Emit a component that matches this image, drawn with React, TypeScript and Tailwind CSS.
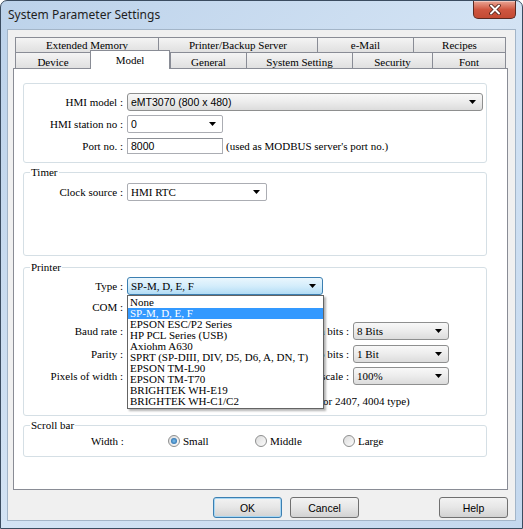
import React from 'react';

const serif = "[font-family:'Liberation_Serif',serif]";
const sans = "[font-family:'Liberation_Sans',Arial,sans-serif]";

const comboKind = {
	gray: 'border-[#8e8f8f] rounded-[3px] bg-linear-to-b from-[#f8f8f8] via-[#ececec] to-[#dcdcdc]',
	white: 'border-[#abadb3] rounded-[2px] bg-white',
	focus: 'border-[#3c7fb1] rounded-[3px] bg-linear-to-b from-[#eaf6fd] via-[#d4edfb] to-[#b2dcf5]',
};

function Arrow() {
	return (
		<svg width="7" height="4" viewBox="0 0 7 4" className="shrink-0">
			<path d="M0 0H7L3.5 4Z" fill="#000" />
		</svg>
	);
}

function Combo({
	className,
	text,
	kind,
	font = serif,
}: {
	className: string;
	text?: string;
	kind: keyof typeof comboKind;
	font?: string;
}) {
	return (
		<div
			className={`flex items-center justify-between h-[18px] border pl-[3px] pr-[6px] ${comboKind[kind]} ${className}`}
		>
			<span className={`${font} whitespace-nowrap`}>{text}</span>
			<Arrow />
		</div>
	);
}

function Label({ children }: { children: React.ReactNode }) {
	return <div className="w-[99px] text-right whitespace-nowrap shrink-0">{children}</div>;
}

function Group({
	title,
	className,
	children,
}: {
	title?: string;
	className: string;
	children: React.ReactNode;
}) {
	return (
		<div
			className={`relative mr-[20px] ml-[9px] border border-[#d5dfe5] rounded-[3px] shadow-[inset_0_0_0_1px_#ffffff] ${className}`}
		>
			{title && (
				<span className="absolute -top-[7px] left-[6px] px-[1px] bg-white leading-[12px]">
					{title}
				</span>
			)}
			{children}
		</div>
	);
}

function Radio({ checked, label, className }: { checked?: boolean; label: string; className: string }) {
	return (
		<div className={`flex items-center ${className}`}>
			<span className="w-[12px] h-[12px] rounded-full border border-[#8e8f8f] bg-linear-to-br from-[#dcdcdc] to-[#fbfbfb] flex items-center justify-center shrink-0">
				{checked && (
					<span className="w-[6px] h-[6px] rounded-full bg-radial from-[#7fc3f0] to-[#11589a]" />
				)}
			</span>
			<span className="ml-[3px]">{label}</span>
		</div>
	);
}

function Button({ label, className }: { label: string; className: string }) {
	return (
		<div
			className={`h-[21px] w-[69px] flex items-center justify-center rounded-[3px] border bg-linear-to-b from-[#f3f3f3] via-[#e6e6e6] to-[#d2d2d2] ${sans} text-[10.5px] ${className}`}
		>
			{label}
		</div>
	);
}

const tabRow1 = [
	{ t: 'Extended Memory', w: 'w-[143px]' },
	{ t: 'Printer/Backup Server', w: 'w-[159px]' },
	{ t: 'e-Mail', w: 'w-[96px]' },
	{ t: 'Recipes', w: 'w-[93px]' },
];

const tabRow2 = [
	{ t: 'Device', w: 'w-[75px]' },
	{ t: 'Model', w: 'w-[80px]', active: true },
	{ t: 'General', w: 'w-[76px]' },
	{ t: 'System Setting', w: 'w-[106px]' },
	{ t: 'Security', w: 'w-[80px]' },
	{ t: 'Font', w: 'w-[74px]' },
];

const printers = [
	'None',
	'SP-M, D, E, F',
	'EPSON ESC/P2 Series',
	'HP PCL Series (USB)',
	'Axiohm A630',
	'SPRT (SP-DIII, DIV, D5, D6, A, DN, T)',
	'EPSON TM-L90',
	'EPSON TM-T70',
	'BRIGHTEK WH-E19',
	'BRIGHTEK WH-C1/C2',
];

const tabBase =
	'flex items-center justify-center border-t border-l border-[#898c95] bg-linear-to-b from-[#f4f4f4] to-[#e0e0e0] whitespace-nowrap';

export default function App() {
	return (
		<div
			className={`w-[523px] h-[529px] flex flex-col border border-[#3b4c60] rounded-t-[7px] bg-linear-to-br from-[#bcd2ea] via-[#d3e3f4] to-[#c4d8ee] text-black text-[11px] leading-[12px] font-normal ${serif}`}
		>
			{/* title bar */}
			<div className="h-[28px] flex items-start justify-between shrink-0">
				<div className="pl-[7px] pt-[7px] [font-family:'Noto_Sans',sans-serif] text-[12px] leading-[14px] text-[#1e1e1e]">
					System Parameter Settings
				</div>
				<div className="mr-[6px] w-[43px] h-[18px] rounded-b-[5px] border border-t-0 border-[#5a2a22] bg-linear-to-b from-[#e9a595] via-[#cf5640] to-[#c34a33] flex items-center justify-center shadow-[inset_0_1px_0_rgba(255,255,255,0.4)]">
					<svg width="12" height="11" viewBox="0 0 12 11">
						<path d="M2 1.5L10 9.5M10 1.5L2 9.5" stroke="#4a1d16" strokeWidth="3.6" strokeLinecap="round" />
						<path d="M2 1.5L10 9.5M10 1.5L2 9.5" stroke="#ffffff" strokeWidth="2" strokeLinecap="round" />
					</svg>
				</div>
			</div>

			{/* client area */}
			<div className="flex-1 mx-[6px] mb-[7px] border border-[#a3b5c8] bg-[#f0f0f0] flex flex-col pt-[7px] pl-[5px] pr-[7px]">
				<div className="flex mx-[2px] h-[15px]">
					{tabRow1.map((tab, i) => (
						<div key={tab.t} className={`${tabBase} ${tab.w} ${i === tabRow1.length - 1 ? 'border-r' : ''}`}>
							{tab.t}
						</div>
					))}
				</div>
				<div className="flex mx-[2px] h-[16px] items-start relative z-10">
					{tabRow2.map((tab, i) =>
						tab.active ? (
							<div
								key={tab.t}
								className={`${tab.w} h-[19px] -mt-[2px] flex items-start justify-center pt-[3px] border-t border-l border-r border-[#898c95] bg-white`}
							>
								{tab.t}
							</div>
						) : (
							<div
								key={tab.t}
								className={`${tabBase} h-[16px] pt-[3px] ${tab.w} ${i === tabRow2.length - 1 ? 'border-r' : ''}`}
							>
								{tab.t}
							</div>
						)
					)}
				</div>

				{/* panel */}
				<div className="h-[422px] border border-[#898c95] bg-white flex flex-col">
					<Group className="mt-[14px] h-[80px] pt-[9px]">
						<div className="flex items-center h-[18px]">
							<Label>HMI model :</Label>
							<Combo className="ml-[4px] w-[356px]" text="eMT3070 (800 x 480)" kind="gray" font={`${sans} text-[10.5px]`} />
						</div>
						<div className="flex items-center h-[18px] mt-[4px]">
							<Label>HMI station no :</Label>
							<Combo className="ml-[4px] w-[96px]" text="0" kind="white" font={`${sans} text-[10.5px]`} />
						</div>
						<div className="flex items-center h-[16px] mt-[5px]">
							<Label>Port no. :</Label>
							<div className={`ml-[4px] w-[96px] h-[16px] border border-[#abadb3] border-t-[#8d9096] bg-white pl-[3px] flex items-center ${sans} text-[10.5px]`}>
								8000
							</div>
							<span className="ml-[3px] whitespace-nowrap">(used as MODBUS server&apos;s port no.)</span>
						</div>
					</Group>

					<Group title="Timer" className="mt-[9px] h-[84px] pt-[10px]">
						<div className="flex items-center h-[18px]">
							<Label>Clock source :</Label>
							<Combo className="ml-[4px] w-[140px]" text="HMI RTC" kind="white" />
						</div>
					</Group>

					<Group title="Printer" className="mt-[11px] h-[149px] pt-[9px]">
						<div className="flex items-center h-[18px]">
							<Label>Type :</Label>
							<Combo className="ml-[4px] w-[196px]" text="SP-M, D, E, F" kind="focus" />
						</div>
						<div className="flex items-center h-[18px] mt-[3px]">
							<Label>COM :</Label>
							<Combo className="ml-[4px] w-[196px]" kind="gray" />
						</div>
						<div className="flex items-center h-[18px] mt-[6px]">
							<Label>Baud rate :</Label>
							<Combo className="ml-[4px] w-[196px]" kind="gray" />
							<div className="w-[26px] flex justify-end shrink-0">
								<span className="whitespace-nowrap">Data bits :</span>
							</div>
							<Combo className="ml-[4px] w-[96px]" text="8 Bits" kind="gray" />
						</div>
						<div className="flex items-center h-[18px] mt-[5px]">
							<Label>Parity :</Label>
							<Combo className="ml-[4px] w-[196px]" kind="gray" />
							<div className="w-[26px] flex justify-end shrink-0">
								<span className="whitespace-nowrap">Stop bits :</span>
							</div>
							<Combo className="ml-[4px] w-[96px]" text="1 Bit" kind="gray" />
						</div>
						<div className="flex items-center h-[18px] mt-[4px]">
							<Label>Pixels of width :</Label>
							<div className="ml-[4px] w-[196px] h-[16px] border border-[#abadb3] bg-white" />
							<div className="w-[26px] flex justify-end shrink-0">
								<span className="whitespace-nowrap">Print scale :</span>
							</div>
							<Combo className="ml-[4px] w-[96px]" text="100%" kind="gray" />
						</div>
						<div className="flex items-center h-[14px] mt-[9px]">
							<div className="ml-[103px] w-[196px] shrink-0" />
							<span className="whitespace-nowrap">or 2407, 4004 type)</span>
						</div>

						{/* opened dropdown of Type */}
						<div className="absolute left-[103px] top-[27px] w-[197px] h-[114px] z-20 border border-[#646464] bg-white py-[1px] shadow-[2px_2px_2px_rgba(0,0,0,0.3)]">
							{printers.map((p, i) => (
								<div
									key={p}
									className={`h-[11px] leading-[11px] px-[2px] whitespace-nowrap ${
										i === 1 ? 'bg-[#3399ff] text-white' : ''
									}`}
								>
									{p}
								</div>
							))}
						</div>
					</Group>

					<Group title="Scroll bar" className="mt-[9px] h-[32px] pt-[8px]">
						<div className="flex items-center h-[14px]">
							<div className="ml-[67px] w-[77px] shrink-0">Width :</div>
							<Radio checked label="Small" className="w-[87px]" />
							<Radio label="Middle" className="w-[88px]" />
							<Radio label="Large" className="w-[80px]" />
						</div>
					</Group>
				</div>

				{/* buttons */}
				<div className="flex mt-[7px]">
					<Button label="OK" className="ml-[200px] border-[#3c7fb1] shadow-[inset_0_0_0_1px_#a7d7f4]" />
					<Button label="Cancel" className="ml-[8px] border-[#707070]" />
					<Button label="Help" className="ml-auto border-[#707070]" />
				</div>
			</div>
		</div>
	);
}
